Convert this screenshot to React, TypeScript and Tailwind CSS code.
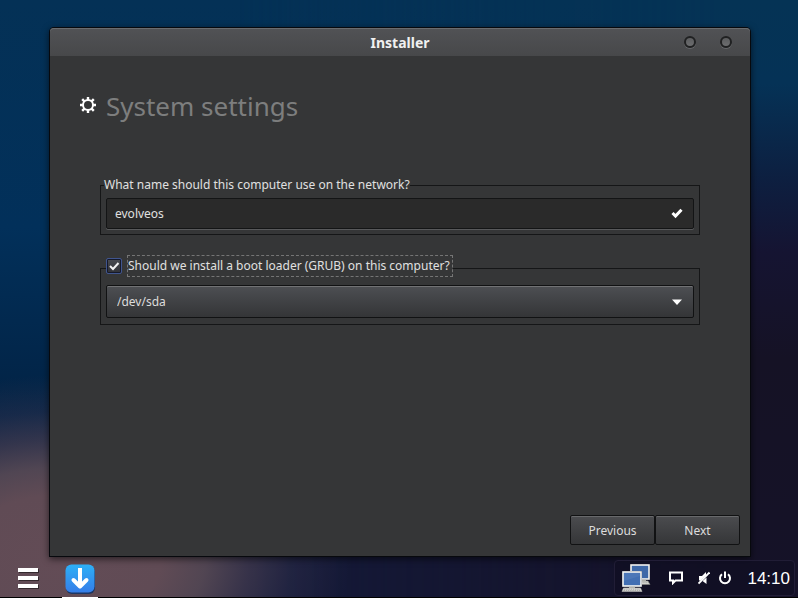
import { useState } from "react";
import type { ReactNode } from "react";

function GearIcon() {
  return (
    <svg viewBox="0 0 16 16" className="mb-0.5 size-4 shrink-0" fill="none" stroke="#fff" aria-hidden="true">
      <circle cx="8" cy="8" r="5" strokeWidth="2" />
      <path
        d="M8 0v3M8 13v3M0 8h3M13 8h3M2.200 2.200l2.200 2.200M11.600 11.600l2.200 2.200M2.200 13.800l2.200-2.200M11.600 4.400l2.200-2.200"
        strokeWidth="2.400"
      />
    </svg>
  );
}

function TitleDot({ label }: { label: string }) {
  return (
    <button
      type="button"
      aria-label={label}
      className="size-3 rounded-full border-2 border-[#202122] bg-linear-to-b from-[#5c5d5f] to-[#6c6d6f] shadow-[0_1px_0_#67686b]"
    />
  );
}

function NavButton({ children }: { children: ReactNode }) {
  return (
    <button
      type="button"
      className="h-[30px] w-[85px] rounded-xs border border-[#111213] bg-linear-to-b from-[#4b4c4f] to-[#353638] pt-0.5 text-[#dcdcdc] shadow-[inset_0_1px_0_#68696b]"
    >
      {children}
    </button>
  );
}

function NetworkIcon() {
  return (
    <svg viewBox="0 0 30 28" className="h-7 w-[30px]" aria-hidden="true">
      <path d="M19 17h8l2 3.500H20z" fill="#d8d8d5" stroke="#85877f" strokeWidth=".6" />
      <path d="M20 18.700h8" stroke="#8d8f89" strokeWidth=".6" strokeDasharray="1.500 .7" />
      <rect x="10" y="1" width="18" height="14" fill="#3e68a8" stroke="#f2f2ef" strokeWidth="1.600" />
      <path d="M20 15.800h5v1.500h-5z" fill="#aeb0aa" />
      <rect x="1" y="7" width="20" height="16" fill="#1b2440" />
      <rect x="2" y="8" width="18" height="14" fill="#426fb3" stroke="#f5f5f2" strokeWidth="1.600" />
      <path d="M3 9h16v3L3 17z" fill="#5580bd" opacity=".5" />
      <path d="M8 22.800h6V24H8z" fill="#aeb0aa" />
      <path d="M2.500 24h17l1.500 3.500H1z" fill="#dededb" stroke="#b5b6b1" strokeWidth=".6" />
      <path d="M3 25.200h16M2.500 26.500h17" stroke="#8d8f89" strokeWidth=".6" strokeDasharray="1.500 .7" />
    </svg>
  );
}

export default function App() {
  const [host, setHost] = useState("evolveos");
  const [grub, setGrub] = useState(true);

  return (
    <div className="relative isolate flex min-h-screen flex-col overflow-hidden bg-[linear-gradient(to_bottom,#043156_0%,#02305a_38%,#022447_65%,#141a3a_90%)] font-['Noto_Sans',sans-serif] text-xs text-[#e0e0e0]">
      <div className="absolute inset-0 -z-10 bg-[linear-gradient(to_bottom,#053355_0%,#053256_14%,#0d1f40_30%,#151432_42%,#151225_60%,#151228_100%)] mask-[linear-gradient(to_right,transparent_30%,#000_90%)]" />
      <div className="absolute inset-0 -z-10 bg-[radial-gradient(ellipse_290px_185px_at_60px_560px,#634c56_0%,#604b55_35%,#584a55e6_50%,#4a4052a6_65%,#3a385259_80%,transparent_100%)]" />

      <main className="flex flex-1 flex-col pt-7 pr-12 pl-[50px]">
        <section
          aria-label="Installer"
          className="flex flex-1 flex-col rounded-t-sm bg-[#353637] shadow-[0_0_0_1px_#07090d,0_2px_7px_1px_#0009]"
        >
          <header className="grid h-7 grid-cols-[1fr_auto_1fr] items-center rounded-t-sm bg-linear-to-b from-[#515255] to-[#47484a] shadow-[inset_0_1px_0_#6a6c6f]">
            <h1 className="col-start-2 pt-0.5 text-sm font-bold text-[#f0f0f0]">Installer</h1>
            <div className="flex justify-end gap-6 pr-[18px]">
              <TitleDot label="Minimize" />
              <TitleDot label="Close" />
            </div>
          </header>

          <div className="flex flex-1 flex-col px-[30px] pt-8">
            <h2 className="flex items-center gap-2.5 text-[26px] leading-9 text-[#7d7e7e]">
              <GearIcon />
              System settings
            </h2>

            <form className="mx-5 mt-[51px] flex flex-col">
              <fieldset className="min-w-0 border border-[#151617] px-[5px] pb-[5px]">
                <legend className="-ml-0.5 leading-5">
                  <label htmlFor="hostname">What name should this computer use on the network?</label>
                </legend>
                <div className="mt-[3px] flex h-[31px] items-center rounded-xs border border-[#131415] bg-[#2a2a2a] pr-2.5 pl-2 shadow-[0_1px_0_#58595b]">
                  <input
                    id="hostname"
                    value={host}
                    onChange={(e) => setHost(e.target.value)}
                    className="min-w-0 flex-1 bg-transparent text-[#e0e0e0] outline-none"
                  />
                  <svg viewBox="0 0 12 12" className="size-3" aria-hidden="true">
                    <path d="M1.500 5l3 3L10.500 1.700" fill="none" stroke="#fff" strokeWidth="3" />
                  </svg>
                </div>
              </fieldset>

              <fieldset className="mt-5 min-w-0 border border-[#151617] px-[5px] pb-[6px]">
                <legend className="pb-1">
                  <span className="flex items-center gap-[5px]">
                    <span className="relative flex size-4">
                      <input
                        id="grub"
                        type="checkbox"
                        checked={grub}
                        onChange={(e) => setGrub(e.target.checked)}
                        className="peer size-4 appearance-none rounded-xs border border-[#40558e] bg-linear-to-b from-[#4a4c52] to-[#303136] shadow-[inset_0_0_0_1px_#15192b]"
                      />
                      <svg
                        viewBox="0 0 16 16"
                        className="pointer-events-none absolute inset-0 hidden size-4 peer-checked:block"
                        aria-hidden="true"
                      >
                        <path d="M4 8l3 3 5.500-6" fill="none" stroke="#f2f2f2" strokeWidth="2" />
                      </svg>
                    </span>
                    <label htmlFor="grub" className="border border-dashed border-[#757575] pr-0.5 leading-5">
                      Should we install a boot loader (GRUB) on this computer?
                    </label>
                  </span>
                </legend>
                <div className="relative mt-1">
                  <select
                    aria-label="Boot loader device"
                    className="block h-[33px] w-full appearance-none rounded-xs border border-[#111213] bg-linear-to-b from-[#4d4f53] to-[#343537] px-2.5 text-[#dcdcdc] shadow-[inset_0_1px_0_#717274]"
                  >
                    <option>/dev/sda</option>
                  </select>
                  <svg
                    viewBox="0 0 10 6"
                    className="pointer-events-none absolute top-1/2 right-3 h-1.5 w-2.5 -translate-y-1/2"
                    aria-hidden="true"
                  >
                    <path d="M0 .5h10L5 6z" fill="#fff" />
                  </svg>
                </div>
              </fieldset>
            </form>
          </div>

          <footer className="flex justify-end px-2.5 pb-[11px]">
            <NavButton>Previous</NavButton>
            <NavButton>Next</NavButton>
          </footer>
        </section>
      </main>

      <footer className="mt-0.5 flex h-10 items-stretch justify-between border-b border-black">
        <nav className="flex">
          <button type="button" aria-label="Menu" className="flex w-14 items-center justify-center pt-0.5">
            <svg viewBox="0 0 21 21" className="size-[21px]" aria-hidden="true">
              <path d="M1 1h20v4H1zM1 9h20v4H1zM1 17h20v4H1z" fill="#0007" />
              <path d="M0 0h20v4H0zM0 8h20v4H0zM0 16h20v4H0z" fill="#fff" />
            </svg>
          </button>
          <button
            type="button"
            aria-label="Installer"
            className="-mb-px ml-1.5 flex w-9 items-center justify-center border-b border-white pt-0.5"
          >
            <svg viewBox="0 0 30 30" className="size-[30px]" aria-hidden="true">
              <defs>
                <linearGradient id="tile" x1="0" y1="0" x2="0" y2="1">
                  <stop offset="0" stopColor="#2db0f7" />
                  <stop offset="1" stopColor="#357de8" />
                </linearGradient>
              </defs>
              <rect x="1" y="2" width="29" height="28" rx="6" fill="#1c3664" />
              <rect x=".5" y=".5" width="29" height="28" rx="6" fill="url(#tile)" />
              <path d="M15 6v15" stroke="#fff" strokeWidth="4" strokeLinecap="square" />
              <path
                d="M8.500 16L15 22.500l6.500-6.500"
                fill="none"
                stroke="#fff"
                strokeWidth="4"
                strokeLinecap="round"
                strokeLinejoin="round"
              />
            </svg>
          </button>
        </nav>

        <div className="mt-0.5 mr-[3px] mb-px flex items-center rounded-sm border border-[#211d36] bg-[#100e22]/70 pr-1 pl-1.5 text-white">
          <button type="button" aria-label="Network">
            <NetworkIcon />
          </button>
          <button type="button" aria-label="Messages" className="ml-[18px]">
            <svg viewBox="0 0 14 14" className="size-3.5" aria-hidden="true">
              <path d="M1 1.500h12v8H6.500L4 12V9.500H1z" fill="none" stroke="#fff" strokeWidth="2" />
            </svg>
          </button>
          <button type="button" aria-label="Sound muted" className="ml-[15px]">
            <svg viewBox="0 0 12 14" className="h-3.5 w-3" fill="#fff" aria-hidden="true">
              <path d="M1 5h3l4-4v3.500L2.500 9.500H1zM8.500 6.500V13L4.500 10z" />
              <path d="M.5 12.500L11.500 1.500" stroke="#fff" strokeWidth="1.800" />
            </svg>
          </button>
          <button type="button" aria-label="Power" className="ml-2">
            <svg viewBox="0 0 14 14" className="size-3.5" fill="none" stroke="#fff" strokeWidth="2" aria-hidden="true">
              <path d="M4 3.200a5 5 0 1 0 6 0M7 .5v6.500" />
            </svg>
          </button>
          <time className="ml-[15px] pt-0.5 font-['Liberation_Sans',sans-serif] text-[17px]">14:10</time>
        </div>
      </footer>
    </div>
  );
}
